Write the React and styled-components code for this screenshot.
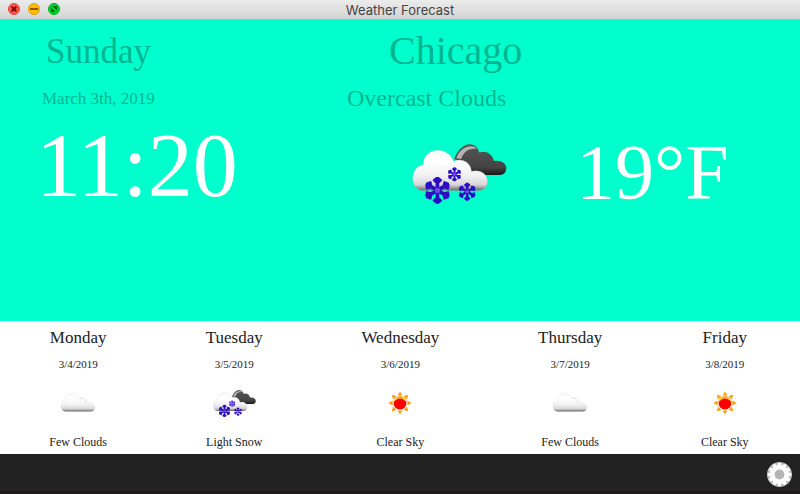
import React from "react";
import styled, { createGlobalStyle } from "styled-components";

const GlobalStyle = createGlobalStyle`
  * { box-sizing: border-box; }
  html, body, #root { height: 100%; }
  body { margin: 0; background: #fff; }
`;

const Window = styled.div`
  display: flex;
  flex-direction: column;
  min-height: 100vh;
  font-family: "Liberation Serif", "Times New Roman", serif;
  color: #222;
`;

const TitleBar = styled.header`
  display: grid;
  grid-template-columns: 1fr auto 1fr;
  align-items: center;
  height: 20px;
  padding: 0 8px;
  background: linear-gradient(#ececec, #d3d3d3);
  border-bottom: 1px solid #b4b4b4;
`;

const Controls = styled.div`
  display: flex;
  gap: 8px;
  padding-bottom: 1px;
`;

const ControlButton = styled.button`
  display: block;
  width: 12px;
  height: 12px;
  padding: 0;
  border: 1px solid ${(p) => p.$edge};
  border-radius: 50%;
  background: ${(p) => p.$fill};

  svg { display: block; }
`;

const WindowTitle = styled.h1`
  margin: 0;
  font: 400 13px/18px Inter, sans-serif;
  color: #444;
`;

const Hero = styled.main`
  flex: 1;
  display: grid;
  grid-template-columns: 43% 1fr;
  grid-template-rows: 63px 32px 1fr;
  background: #00ffcc;
  color: #00b692;
`;

const Day = styled.h2`
  margin: 0;
  padding: 12px 0 0 46px;
  font-size: 35px;
  font-weight: 400;
  line-height: 40px;
`;

const City = styled.h2`
  margin: 0;
  padding: 8px 0 0 45px;
  font-size: 40px;
  font-weight: 400;
  line-height: 46px;
`;

const Today = styled.p`
  margin: 0;
  padding: 6px 0 0 42px;
  font-size: 17px;
  line-height: 20px;
`;

const Summary = styled.p`
  margin: 0;
  padding: 1px 0 0 3px;
  font-size: 24px;
  line-height: 28px;
`;

const Clock = styled.time`
  display: block;
  padding: 1px 0 0 36px;
  font-size: 90px;
  line-height: 100px;
  color: #fff;
`;

const Conditions = styled.div`
  display: flex;
  align-items: flex-start;
  gap: 67px;
  padding: 27px 0 0 66px;
`;

const Temperature = styled.span`
  font-size: 78px;
  line-height: 60px;
  color: #fff;
`;

const Forecast = styled.section`
  display: flex;
  justify-content: space-around;
  padding: 7px 2px 4px 0;
  background: #fff;
`;

const DayCard = styled.article`
  display: flex;
  flex-direction: column;
  align-items: center;
`;

const DayName = styled.h3`
  margin: 0;
  font-size: 17px;
  font-weight: 400;
  line-height: 20px;
`;

const DayDate = styled.span`
  margin-top: 9px;
  font-size: 11px;
  line-height: 14px;
`;

const IconSlot = styled.div`
  display: flex;
  align-items: center;
  justify-content: center;
  height: 30px;
  margin: 17px 0 16px;
`;

const DaySummary = styled.span`
  font-size: 12px;
  line-height: 16px;
`;

const Footer = styled.footer`
  display: flex;
  align-items: center;
  justify-content: flex-end;
  height: 40px;
  padding: 0 8px;
  background: #222;
  border-bottom: 3px solid #1f1b1d;
`;

const SettingsButton = styled.button`
  padding: 0;
  border: 0;
  border-radius: 50%;
  background: none;
  margin-top: 4px;

  svg { display: block; }
`;

const CLOUD =
  "M65 182 C46 178 38 162 38 144 C40 120 53 109 68 106 C72 78 86 62 114 62 C138 62 154 77 160 95 C186 84 211 98 214 125 C239 118 262 132 262 157 C259 173 251 182 235 182 Z";

function WhiteCloud({ id }) {
  return (
    <>
      <defs>
        <linearGradient id={id} x1="0" y1="0" x2="0" y2="1">
          <stop offset="0" stopColor="#f8f8f8" />
          <stop offset="0.3" stopColor="#ffffff" />
          <stop offset="0.65" stopColor="#f0f0f0" />
          <stop offset="0.86" stopColor="#d6d6d6" />
          <stop offset="1" stopColor="#6c6c6c" />
        </linearGradient>
      </defs>
      <path d={CLOUD} fill={`url(#${id})`} stroke="#aaa" strokeOpacity="0.25" strokeWidth="3" />
    </>
  );
}

function Flake({ x, y, r }) {
  return (
    <g transform={`translate(${x} ${y}) scale(${r / 40})`} stroke="#2d0cc6" strokeWidth="11" fill="none">
      {[0, 60, 120, 180, 240, 300].map((a) => (
        <path key={a} transform={`rotate(${a})`} d="M0 -6V-40M-11 -34L0 -23L11 -34" />
      ))}
      <circle r="8" fill="#6a48e4" stroke="none" />
    </g>
  );
}

function SnowIcon({ id, width, height }) {
  return (
    <svg width={width} height={height} viewBox="30 38 296 190" aria-hidden="true">
      <defs>
        <linearGradient id={`${id}-dark`} x1="0" y1="0" x2="0" y2="1">
          <stop offset="0" stopColor="#555" />
          <stop offset="0.75" stopColor="#444" />
          <stop offset="1" stopColor="#181818" />
        </linearGradient>
      </defs>
      <path
        d="M162 88 C170 65 188 44 209 44 C224 44 234 55 237 69 C255 62 276 72 281 94 C302 91 318 101 318 116 C317 129 310 136 298 136 H215 L190 100 Z"
        fill={`url(#${id}-dark)`}
      />
      <path d="M168 86 C176 64 192 51 211 50 C222 50 227 54 229 58 C207 54 190 66 183 88 Z" fill="#ccc" fillOpacity="0.8" />
      <WhiteCloud id={`${id}-light`} />
      <Flake x={112} y={182} r={40} />
      <Flake x={163} y={134} r={21} />
      <Flake x={201} y={186} r={27} />
    </svg>
  );
}

function CloudIcon({ id }) {
  return (
    <svg width="36" height="22" viewBox="32 54 237 145" aria-hidden="true">
      <WhiteCloud id={id} />
      <path d="M160 95 C184 91 198 103 201 124" fill="none" stroke="#bbb" strokeOpacity="0.5" strokeWidth="5" />
    </svg>
  );
}

function SunIcon({ id }) {
  return (
    <svg width="24" height="24" viewBox="-12 -12 24 24" aria-hidden="true">
      <defs>
        <linearGradient id={id} x1="0" y1="0" x2="0" y2="1">
          <stop offset="0" stopColor="#ffa200" />
          <stop offset="1" stopColor="#ffe04a" />
        </linearGradient>
      </defs>
      {[0, 45, 90, 135, 180, 225, 270, 315].map((a) => (
        <path key={a} transform={`rotate(${a})`} d="M0 -11.6L2.4 -7.4H-2.4Z" fill="#ff9c0a" />
      ))}
      <circle r="6.5" fill="#ff4a00" />
      <path d="M-6.2 -2C-4.6 -8.2 4.6 -8.2 6.2 -2Z" fill={`url(#${id})`} />
      <ellipse cy="0.9" rx="6.1" ry="5.3" fill="#ff0000" />
    </svg>
  );
}

function GearIcon() {
  const teeth = Array.from({ length: 12 }, (_, i) => i * 30);
  return (
    <svg width="25" height="25" viewBox="-12.5 -12.5 25 25" aria-hidden="true">
      <circle r="12.5" fill="#b9b9b9" />
      <circle r="9.2" fill="#fff" />
      {teeth.map((a) => (
        <path key={a} transform={`rotate(${a})`} d="M-2.3 -8.6L-1.3 -11.8H1.3L2.3 -8.6Z" fill="#fff" />
      ))}
      <circle r="4.9" fill="#b4b4b4" />
    </svg>
  );
}

const icons = { snow: SnowIcon, cloud: CloudIcon, sun: SunIcon };

const days = [
  { name: "Monday", date: "3/4/2019", icon: "cloud", summary: "Few Clouds" },
  { name: "Tuesday", date: "3/5/2019", icon: "snow", summary: "Light Snow" },
  { name: "Wednesday", date: "3/6/2019", icon: "sun", summary: "Clear Sky" },
  { name: "Thursday", date: "3/7/2019", icon: "cloud", summary: "Few Clouds" },
  { name: "Friday", date: "3/8/2019", icon: "sun", summary: "Clear Sky" },
];

export default function App() {
  return (
    <Window>
      <GlobalStyle />
      <TitleBar>
        <Controls>
          <ControlButton $fill="#ff5650" $edge="#e2443e" aria-label="Close">
            <svg width="10" height="10" viewBox="0 0 10 10">
              <path d="M2.6 2.6L7.4 7.4M7.4 2.6L2.6 7.4" stroke="#850000" strokeWidth="2" />
            </svg>
          </ControlButton>
          <ControlButton $fill="#ffbd00" $edge="#e0a000" aria-label="Minimize">
            <svg width="10" height="10" viewBox="0 0 10 10">
              <path d="M1 5H9" stroke="#9a5200" strokeWidth="2" />
            </svg>
          </ControlButton>
          <ControlButton $fill="#00d32b" $edge="#00b324" aria-label="Full screen">
            <svg width="10" height="10" viewBox="0 0 10 10">
              <path d="M3.4 2H8V6.6ZM2 3.4V8H6.6Z" fill="#006b0b" />
            </svg>
          </ControlButton>
        </Controls>
        <WindowTitle>Weather Forecast</WindowTitle>
      </TitleBar>
      <Hero>
        <Day>Sunday</Day>
        <City>Chicago</City>
        <Today>March 3th, 2019</Today>
        <Summary>Overcast Clouds</Summary>
        <Clock>11:20</Clock>
        <Conditions>
          <SnowIcon id="now" width="99" height="64" />
          <Temperature>19°F</Temperature>
        </Conditions>
      </Hero>
      <Forecast aria-label="Five day forecast">
        {days.map((day) => {
          const Icon = icons[day.icon];
          return (
            <DayCard key={day.name}>
              <DayName>{day.name}</DayName>
              <DayDate>{day.date}</DayDate>
              <IconSlot>
                <Icon id={`icon-${day.name}`} width="45" height="29" />
              </IconSlot>
              <DaySummary>{day.summary}</DaySummary>
            </DayCard>
          );
        })}
      </Forecast>
      <Footer>
        <SettingsButton aria-label="Settings">
          <GearIcon />
        </SettingsButton>
      </Footer>
    </Window>
  );
}
